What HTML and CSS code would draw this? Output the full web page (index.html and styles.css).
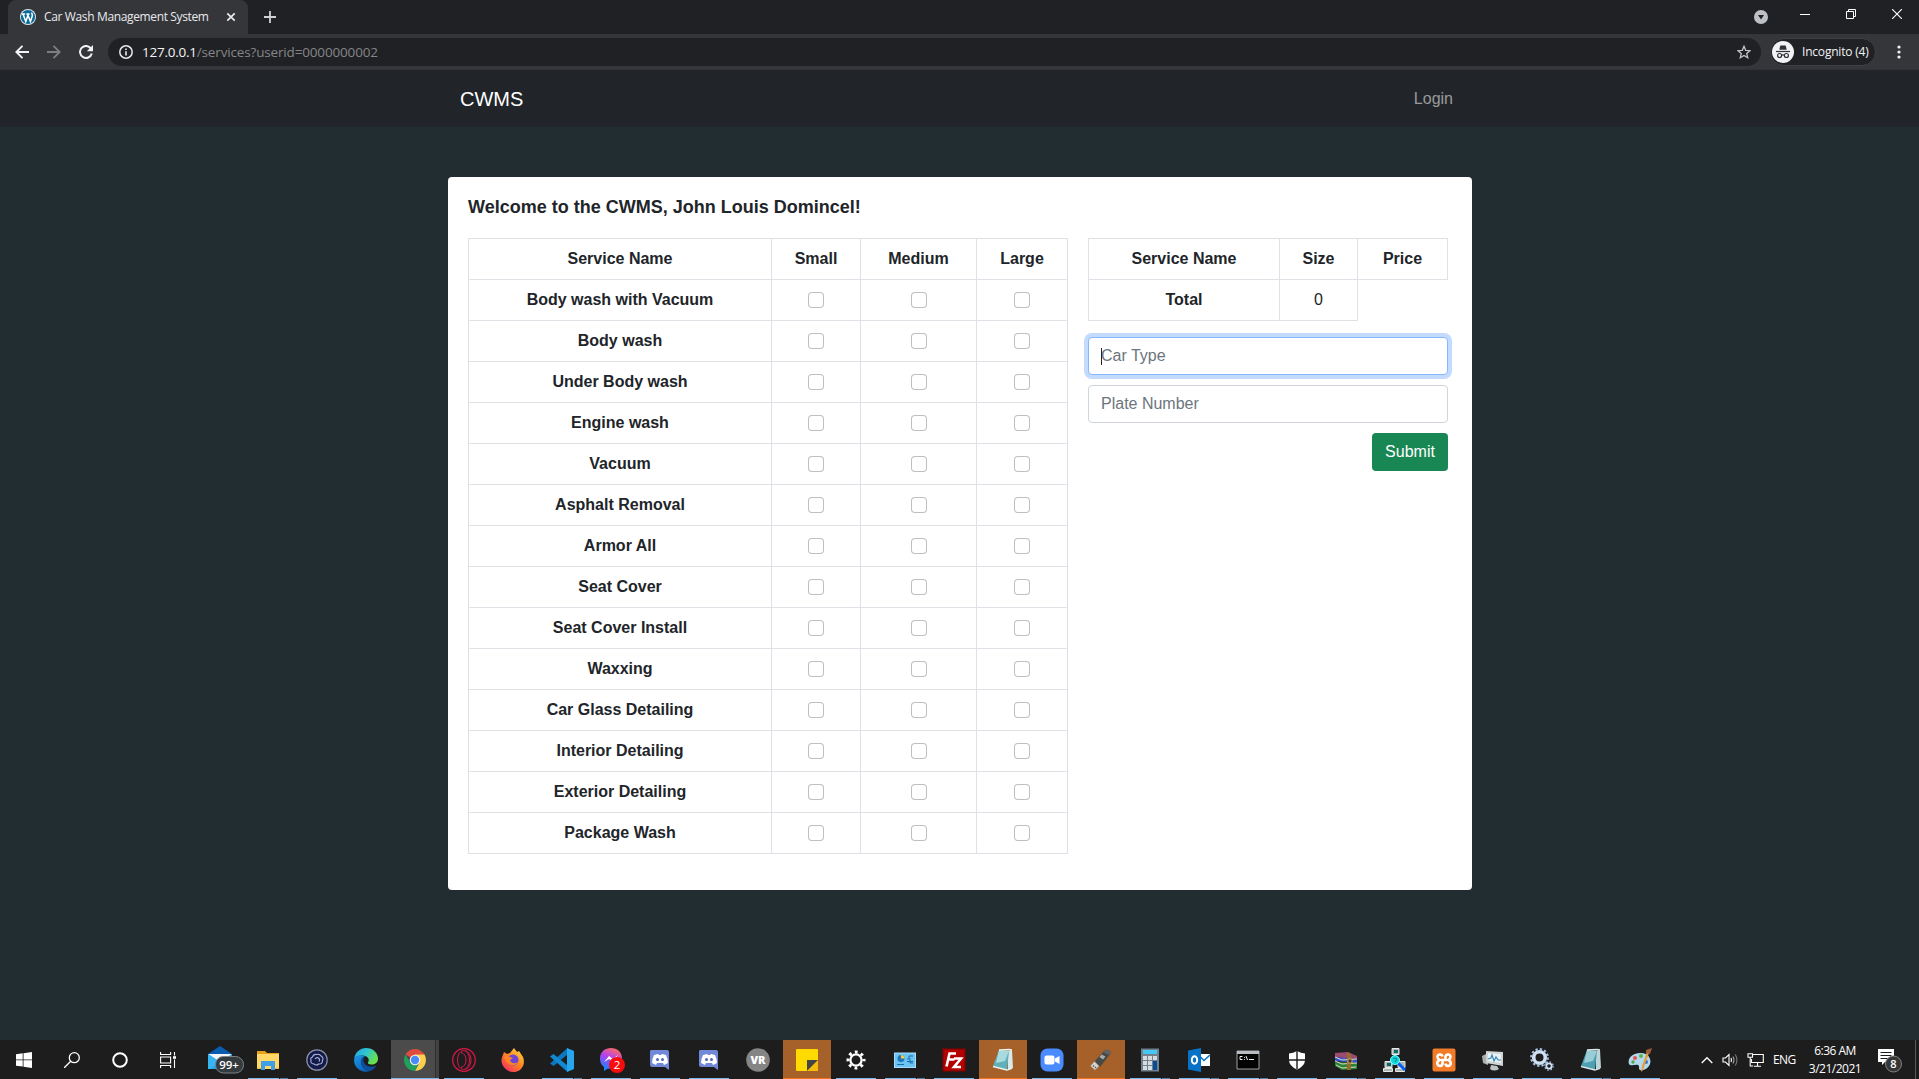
FILE: index.html
```html
<!DOCTYPE html>
<html lang="en">
<head>
<meta charset="utf-8">
<title>Car Wash Management System</title>
<link rel="stylesheet" href="styles.css">
</head>
<body>
<div class="screen">
  <header class="tabstrip">
    <div class="tab">
      <svg class="favicon" width="16" height="16" viewBox="0 0 16 16"><circle cx="8" cy="8" r="8" fill="#dfeaf0"/><circle cx="8" cy="8" r="7.1" fill="#0b6a99"/><path d="M1.8 5h3.4M6.4 5h3.2M3 5l2.8 7.6L8 6.3l2.4 6.3 1.8-5.4c.6-1.6-.8-2.2-.2-3.8M7.2 5l.8 2" fill="none" stroke="#fff" stroke-width="1.5"/></svg>
      <span class="tab-title">Car Wash Management System</span>
      <svg class="tab-close" width="10" height="10" viewBox="0 0 10 10"><path d="M1.3 1.3l7.4 7.4M8.7 1.3L1.3 8.7" stroke="#e8eaed" stroke-width="1.7"/></svg>
    </div>
    <svg class="new-tab" width="12" height="12" viewBox="0 0 12 12"><path d="M6 0v12M0 6h12" stroke="#d0d3d6" stroke-width="1.8"/></svg>
    <div class="window-buttons">
      <svg width="14" height="14" viewBox="0 0 14 14"><circle cx="7" cy="7" r="7" fill="#bdc1c6"/><path d="M4 5h6L7 9.5z" fill="#202124"/></svg>
      <svg class="wb-min" width="10" height="10" viewBox="0 0 10 10"><path d="M0 5.5h10" stroke="#fff"/></svg>
      <svg class="wb-max" width="10" height="10" viewBox="0 0 10 10"><path d="M.5 2.500h7v7h-7zM2.500 2.500v-2h7v7h-2" fill="none" stroke="#fff"/></svg>
      <svg class="wb-close" width="10" height="10" viewBox="0 0 10 10"><path d="M0 0l10 10M10 0L0 10" stroke="#fff" stroke-width="1.1"/></svg>
    </div>
  </header>
  <div class="toolbar">
    <svg class="nav-back" width="14" height="14" viewBox="0 0 14 14"><path d="M14 7H1.500M7.500.8L1.300 7l6.200 6.200" fill="none" stroke="#f1f3f4" stroke-width="1.900"/></svg>
    <svg class="nav-fwd" width="14" height="14" viewBox="0 0 14 14"><path d="M0 7h12.500M6.500.8L12.700 7l-6.200 6.200" fill="none" stroke="#7c7e82" stroke-width="1.800"/></svg>
    <svg class="nav-reload" width="14" height="14" viewBox="0 0 14 14"><path d="M12 3.600A6 6 0 1 0 12.800 8.600" fill="none" stroke="#f1f3f4" stroke-width="2"/><path d="M14 0v6.200H7.800z" fill="#f1f3f4"/></svg>
    <div class="omnibox">
      <svg width="14" height="14" viewBox="0 0 14 14"><circle cx="7" cy="7" r="6.200" fill="none" stroke="#e8eaed" stroke-width="1.500"/><path d="M7 6.200v4.300M7 3.400v1.600" stroke="#e8eaed" stroke-width="1.600"/></svg>
      <span class="url"><span class="host">127.0.0.1</span><span class="path">/services?userid=0000000002</span></span>
      <svg class="star" width="14" height="14" viewBox="0 0 14 14"><path d="M7 1.300l1.700 4 4.300.4-3.300 2.800 1 4.200L7 10.500l-3.700 2.200 1-4.200L1 5.700l4.300-.4z" fill="none" stroke="#c4c7ca" stroke-width="1.300"/></svg>
    </div>
    <div class="profile">
      <svg width="22" height="22" viewBox="0 0 22 22"><circle cx="11" cy="11" r="11" fill="#f1f3f4"/><path d="M8.300 4.500h5.400l1 4.300H7.300z" fill="#303236"/><path d="M4 10.500h14" stroke="#303236" stroke-width="1.200"/><g fill="none" stroke="#303236" stroke-width="1.200"><circle cx="7.600" cy="14.500" r="2"/><circle cx="14.400" cy="14.500" r="2"/><path d="M9.600 14.200q1.400-.8 2.800 0"/></g></svg>
      <span class="profile-name">Incognito (4)</span>
    </div>
    <svg class="kebab" width="4" height="14" viewBox="0 0 4 14" fill="#f1f3f4"><circle cx="2" cy="2" r="1.600"/><circle cx="2" cy="7" r="1.600"/><circle cx="2" cy="12" r="1.600"/></svg>
  </div>

  <main class="page">
    <nav class="navbar">
      <div class="navbar-inner"><a class="brand">CWMS</a><a class="nav-link">Login</a></div>
    </nav>
    <section class="card">
      <h1 class="welcome">Welcome to the CWMS, John Louis Domincel!</h1>
      <div class="columns">
        <table class="table services">
          <colgroup><col class="c-name"><col class="c-small"><col class="c-medium"><col class="c-large"></colgroup>
          <thead><tr><th>Service Name</th><th>Small</th><th>Medium</th><th>Large</th></tr></thead>
          <tbody>
            <tr><th>Body wash with Vacuum</th><td><input type="checkbox" class="check"></td><td><input type="checkbox" class="check"></td><td><input type="checkbox" class="check"></td></tr>
            <tr><th>Body wash</th><td><input type="checkbox" class="check"></td><td><input type="checkbox" class="check"></td><td><input type="checkbox" class="check"></td></tr>
            <tr><th>Under Body wash</th><td><input type="checkbox" class="check"></td><td><input type="checkbox" class="check"></td><td><input type="checkbox" class="check"></td></tr>
            <tr><th>Engine wash</th><td><input type="checkbox" class="check"></td><td><input type="checkbox" class="check"></td><td><input type="checkbox" class="check"></td></tr>
            <tr><th>Vacuum</th><td><input type="checkbox" class="check"></td><td><input type="checkbox" class="check"></td><td><input type="checkbox" class="check"></td></tr>
            <tr><th>Asphalt Removal</th><td><input type="checkbox" class="check"></td><td><input type="checkbox" class="check"></td><td><input type="checkbox" class="check"></td></tr>
            <tr><th>Armor All</th><td><input type="checkbox" class="check"></td><td><input type="checkbox" class="check"></td><td><input type="checkbox" class="check"></td></tr>
            <tr><th>Seat Cover</th><td><input type="checkbox" class="check"></td><td><input type="checkbox" class="check"></td><td><input type="checkbox" class="check"></td></tr>
            <tr><th>Seat Cover Install</th><td><input type="checkbox" class="check"></td><td><input type="checkbox" class="check"></td><td><input type="checkbox" class="check"></td></tr>
            <tr><th>Waxxing</th><td><input type="checkbox" class="check"></td><td><input type="checkbox" class="check"></td><td><input type="checkbox" class="check"></td></tr>
            <tr><th>Car Glass Detailing</th><td><input type="checkbox" class="check"></td><td><input type="checkbox" class="check"></td><td><input type="checkbox" class="check"></td></tr>
            <tr><th>Interior Detailing</th><td><input type="checkbox" class="check"></td><td><input type="checkbox" class="check"></td><td><input type="checkbox" class="check"></td></tr>
            <tr><th>Exterior Detailing</th><td><input type="checkbox" class="check"></td><td><input type="checkbox" class="check"></td><td><input type="checkbox" class="check"></td></tr>
            <tr><th>Package Wash</th><td><input type="checkbox" class="check"></td><td><input type="checkbox" class="check"></td><td><input type="checkbox" class="check"></td></tr>
          </tbody>
        </table>
        <div class="order">
          <table class="table summary">
            <colgroup><col class="s-name"><col class="s-size"><col class="s-price"></colgroup>
            <thead><tr><th>Service Name</th><th>Size</th><th>Price</th></tr></thead>
            <tbody><tr><th>Total</th><td>0</td></tr></tbody>
          </table>
          <form class="order-form">
            <div class="field"><input class="control focused" type="text" placeholder="Car Type"><span class="caret"></span></div>
            <div class="field"><input class="control" type="text" placeholder="Plate Number"></div>
            <button class="submit" type="button">Submit</button>
          </form>
        </div>
      </div>
    </section>
  </main>

  <footer class="taskbar">
    <div class="sys"><svg width="16" height="16" viewBox="0 0 16 16" fill="#fff"><path d="M0 2.200l6.700-.9v6.200H0zM7.500 1.200L16 0v7.500H7.500zM0 8.300h6.700v6.300L0 13.700zM7.500 8.300H16V16l-8.500-1.200z"/></svg></div>
    <div class="sys"><svg width="16" height="16" viewBox="0 0 16 16" fill="none" stroke="#fff" stroke-width="1.300"><circle cx="10.300" cy="5.700" r="5"/><path d="M6.700 9.300L0 16"/></svg></div>
    <div class="sys"><svg width="16" height="16" viewBox="0 0 16 16"><circle cx="8" cy="8" r="6.800" fill="none" stroke="#fff" stroke-width="2"/></svg></div>
    <div class="sys"><svg width="16" height="16" viewBox="0 0 16 16" fill="none" stroke="#fff" stroke-width="1.100"><path d="M.6 0v2.500h10V0M.6 16v-2.500h10V16M.6 5h10v6H.6zM14.500 0v3.500M14.500 7.500V16"/><path d="M13 4.200h3v2.600h-3z" fill="#fff" stroke="none"/></svg></div>
    <div class="app"><svg class="mail" width="36" height="28" viewBox="0 0 36 28"><path d="M0 8L12 0l12 8v6H0z" fill="#0a5cb0"/><path d="M1 8h22v9H1z" fill="#f5f7f8"/><path d="M0 8l12 8 12-8v15H0z" fill="#21a7ee"/><path d="M0 8l12 8-10 7H0z" fill="#36b4f4"/><rect x="7.500" y="10.500" width="28" height="16.500" rx="8" fill="#343b3f" stroke="#7d8386"/><text x="21" y="22.500" text-anchor="middle" class="badge-text" font-size="11.500" font-weight="600">99+</text></svg></div>
    <div class="app run multi"><svg width="24" height="24" viewBox="0 0 24 24"><path d="M1 3h8l2 2h12v16H1z" fill="#e5a21a"/><path d="M1 6h22v15H1z" fill="#ffd868"/><path d="M5 22v-9h14v9h-4v-4H9v4z" fill="#3fa0e5"/><path d="M1 20h4v1H1zM19 20h4v1h-4z" fill="#efb739"/></svg></div>
    <div class="app run"><svg width="24" height="24" viewBox="0 0 24 24"><circle cx="12" cy="12" r="10.200" fill="#151b48" stroke="#8a92ad" stroke-width="1.200"/><path d="M7.500 9q1-3 4-2.500 3-1 4.500 1.500 3 1.500 1.500 4.500 0 4-4 3.500-2 2-4.500 0-4-.5-3-4-1-2 1.500-3zM10 11q1.500-2 3.500-1 2 1.500.5 3.500" fill="none" stroke="#aab4da" stroke-width="1.100"/></svg></div>
    <div class="app"><svg width="24" height="24" viewBox="0 0 24 24"><defs><linearGradient id="edge" x1="0" y1="0" x2="1" y2=".5"><stop offset="0" stop-color="#22a0e8"/><stop offset=".5" stop-color="#2fc5d0"/><stop offset="1" stop-color="#69e04b"/></linearGradient><linearGradient id="edge2" x1="0" y1="0" x2=".6" y2="1"><stop offset="0" stop-color="#1b9be8"/><stop offset="1" stop-color="#0c62bb"/></linearGradient></defs><path d="M.2 11C1 4 6 0 12 0c7 0 12 5 12 10.500 0 4-3 6-6.500 6-2.500 0-4-1-3.500-2 1.500-2 1-5.500-3-6.500-4-1-9-.5-10.800 3z" fill="url(#edge)"/><path d="M.2 11C2 7.500 7 6.500 11 8c-3 1-4.500 4-4 7 .7 4.500 5 7.500 9 8C7 26-1 19 .2 11z" fill="url(#edge2)"/><path d="M11.500 8.500c-1.800 1-2.500 3-2 5 1 4 6 6.500 12 4.500q1.500-.5 0 1c-1.500 2-3.500 3.500-5.500 4-4-.5-8.300-3.500-9-8-.5-3 1.500-6 4.500-6.500z" fill="#0d4fa0"/></svg></div>
    <div class="app active"><svg width="24" height="24" viewBox="0 0 24 24"><path d="M12 12L2.500 6.500A11 11 0 0 1 21.500 6.500z" fill="#df4b3c"/><path d="M12 12V6.500h9.500A11 11 0 0 1 12 23l4.500-8.500z" fill="#fcd04a"/><path d="M12 23A11 11 0 0 1 2.500 6.500L7.500 15l4.500 2 3-.5z" fill="#20a05a"/><circle cx="12" cy="12" r="5.300" fill="#f1f3f4"/><circle cx="12" cy="12" r="4.200" fill="#4a8af4"/></svg></div>
    <div class="app run"><svg width="24" height="24" viewBox="0 0 24 24" fill="none" stroke="#dc1848"><circle cx="12" cy="12" r="11.300" stroke-width="1.200"/><ellipse cx="11.500" cy="12" rx="6" ry="9.500" stroke-width="1"/><path d="M9 4.500q5 1.500 5 7.500t-5 7.500M13.500 2.300q5.500 3.200 5.500 9.700t-5.500 9.700" stroke-width="1"/></svg></div>
    <div class="app"><svg width="24" height="24" viewBox="0 0 24 24"><defs><linearGradient id="fox" x1="1" y1="0" x2=".2" y2="1"><stop offset="0" stop-color="#ffe14a"/><stop offset=".5" stop-color="#ff8a20"/><stop offset="1" stop-color="#f72b64"/></linearGradient></defs><path d="M3 4l3 2 3-1 4-5 3 4 2-1 4 6c3 8-2 15-10 15S-2 15 1.500 8z" fill="url(#fox)"/><circle cx="12" cy="12" r="5.500" fill="#6d45d5"/><path d="M3 8l5 .5 4 1.500-3 2c1 4 5 4 8 2-2 5-12 5-14-6z" fill="#ff8524"/></svg></div>
    <div class="app run multi"><svg width="24" height="24" viewBox="0 0 24 24"><path d="M17.500 0v6.500L3.500 18 0 15.500z" fill="#0b78bd"/><path d="M17.500 24v-6.500L3.500 6 0 8.500z" fill="#1089d0"/><path d="M17 0l7 3v18l-7 3z" fill="#27a6ee"/></svg></div>
    <div class="app run"><svg class="messenger" width="28" height="28" viewBox="0 0 28 28"><defs><linearGradient id="msg" x1=".7" y1="0" x2=".3" y2="1"><stop offset="0" stop-color="#ff6c5d"/><stop offset=".45" stop-color="#b240f2"/><stop offset="1" stop-color="#0b8cff"/></linearGradient></defs><path d="M13 2c6 0 11 4 11 10.500S19 23 13 23l-3-.5L6 25v-4c-3-2-4-5-4-8.500C2 6 7 2 13 2z" fill="url(#msg)"/><path d="M6 16l5-6 4 3 5-4-5 7-4-3z" fill="#fff"/><circle cx="19" cy="19" r="8" fill="#f80b0b"/><text x="19" y="23" text-anchor="middle" class="badge-text" font-size="11.500">2</text></svg></div>
    <div class="app run"><svg width="24" height="24" viewBox="0 0 24 24"><path d="M3 2h16q2 0 2 2v18l-4-3H4q-2 0-2-2V4q0-2 1-2z" fill="#7289da"/><path d="M6 7l4-1 1 1h2l1-1 4 1q2 4 2 8l-4 2-1-2H9l-1 2-4-2q0-4 2-8z" fill="#fff"/><circle cx="9.500" cy="11.500" r="1.500" fill="#5268b5"/><circle cx="14.500" cy="11.500" r="1.500" fill="#5268b5"/></svg></div>
    <div class="app run"><svg width="24" height="24" viewBox="0 0 24 24"><path d="M3 2h16q2 0 2 2v18l-4-3H4q-2 0-2-2V4q0-2 1-2z" fill="#7289da"/><path d="M6 7l4-1 1 1h2l1-1 4 1q2 4 2 8l-4 2-1-2H9l-1 2-4-2q0-4 2-8z" fill="#fff"/><circle cx="9.500" cy="11.500" r="1.500" fill="#5268b5"/><circle cx="14.500" cy="11.500" r="1.500" fill="#5268b5"/></svg></div>
    <div class="app"><svg width="24" height="24" viewBox="0 0 24 24"><circle cx="12" cy="12" r="11.800" fill="#858585"/><text x="12" y="16" text-anchor="middle" class="badge-text" font-size="11" font-weight="800">VR</text></svg></div>
    <div class="app alert"><svg width="24" height="24" viewBox="0 0 24 24"><path d="M2 1h20q1 0 1 1v10H12v11H2q-1 0-1-1V2q0-1 1-1z" fill="#ffda00"/><path d="M12 12h11L12 23z" fill="#444"/><path d="M23 12v11H12z" fill="#f3bd0c"/></svg></div>
    <div class="app run"><svg width="20" height="20" viewBox="0 0 20 20" fill="none" stroke="#fff"><circle cx="10" cy="10" r="5.600" stroke-width="2.300"/><circle cx="10" cy="10" r="8" stroke-width="3" stroke-dasharray="2.800 3.483" stroke-dashoffset="1.400"/></svg></div>
    <div class="app run multi"><svg width="24" height="24" viewBox="0 0 24 24"><rect x="1.500" y="5" width="21" height="14.500" fill="#6cc4f3" stroke="#a9defa"/><circle cx="8" cy="10.500" r="3.500" fill="#1d76bd"/><path d="M8 10.500V7a3.500 3.500 0 0 1 3.500 3.500z" fill="#ffc92d"/><path d="M14 11h2V8h4M14 13.500h6M17 10v5h3M4 16.500h7" stroke="#176eae" fill="none"/></svg></div>
    <div class="app run"><svg width="24" height="24" viewBox="0 0 24 24"><path d="M1 1h22v22H1z" fill="#b30000" stroke="#860000" stroke-width="1.500" stroke-dasharray="2 1"/><path d="M4.500 18.500L7.500 5.500H14M6.500 11.500h6M12 10.500h7l-7 8.500h7" fill="none" stroke="#fff" stroke-width="2.600"/></svg></div>
    <div class="app alert"><svg width="24" height="24" viewBox="0 0 24 24"><path d="M17 3l4-1 1 18-5 2z" fill="#d7e9ea"/><path d="M8 2l10 1-2 19-14-4z" fill="#5fb0ba"/><path d="M8 2l10 1-4 10-9 2z" fill="#a9dade"/><path d="M8 2l10-.5 3 .5M2 18.500L16 22l5-1.500" stroke="#e9f1f1" stroke-width="1.300" fill="none"/></svg></div>
    <div class="app run"><svg width="24" height="24" viewBox="0 0 24 24"><rect x=".5" y=".5" width="23" height="23" rx="7" fill="#4a8cff"/><rect x="4.500" y="7.500" width="10" height="9" rx="2" fill="#fff"/><path d="M15 10.500L19.500 8v8L15 13.500z" fill="#fff"/></svg></div>
    <div class="app alert"><svg width="24" height="24" viewBox="0 0 24 24"><path d="M5.500 13.500L16 2q4-1 6 3L11 19z" fill="#484949"/><path d="M16 2q4-1 6 3l-2 2-6-3z" fill="#626464"/><path d="M1.500 18l4-4.500 4.500 4.500-4 4z" fill="#d2d2d0"/><path d="M4 17.500l1 1M6 19l1 1" stroke="#555" stroke-width="1.200"/><path d="M10.500 9l2-2.500 4 2-2.500 3z" fill="#aaa"/></svg></div>
    <div class="app run multi"><svg width="24" height="24" viewBox="0 0 24 24"><path d="M3 .5h18v23H3z" fill="#71818d"/><path d="M5 2h14v4H5z" fill="#43c8f4"/><path d="M5 8h4v4H5zM10 8h4v4h-4zM15 8h4v4h-4zM5 13h4v4H5zM10 13h4v4h-4zM5 18h4v4H5zM10 18h4v4h-4z" fill="#d6dcdf"/><path d="M15 13h4v9h-4z" fill="#0d4c94"/></svg></div>
    <div class="app run multi"><svg width="24" height="24" viewBox="0 0 24 24"><path d="M12 6h11v12H12z" fill="#fff"/><path d="M13 8.500l4 4 6-5.500" fill="none" stroke="#0873c6" stroke-width="1.600"/><path d="M1 2.500L14 0v24L1 21.500z" fill="#0873c6"/><ellipse cx="7.500" cy="12" rx="2.700" ry="3.700" fill="none" stroke="#fff" stroke-width="1.900"/></svg></div>
    <div class="app run multi"><svg width="24" height="24" viewBox="0 0 24 24"><path d="M1 3h22v18H1z" fill="#030303" stroke="#9fa1a4"/><path d="M1 3h22v3H1z" fill="#b8bbc0"/><path d="M6.500 8.500H4v3h2.500M8.500 9v.8M8.500 11v.8M10 8l1.500 4M13 11.500h5" stroke="#eee" fill="none"/></svg></div>
    <div class="app run"><svg width="24" height="24" viewBox="0 0 24 24"><path d="M12 3q4 2 8 2.500V12q0 6-8 9.500Q4 18 4 12V5.500Q8 5 12 3z" fill="#fff"/><path d="M12 3v18M4 12h16" stroke="#1d1d1e" stroke-width="1.400"/></svg></div>
    <div class="app run multi"><svg width="24" height="24" viewBox="0 0 24 24"><path d="M1 5l13-1 9 4v4L1 9z" fill="#9c4a70"/><path d="M1 9l22 2v4L1 13z" fill="#3555d0"/><path d="M1 14l22 1v6l-15 1-7-4z" fill="#268536"/><path d="M1 9l7 3 15-1M1 13l7 3 15-1M2 17l6 3 14-1" stroke="#e8d9c0" fill="none"/><path d="M13 4l4 2v16h-4z" fill="#9a6a2a"/><path d="M14 11h4v4h-4z" fill="#333" stroke="#d0aa59"/></svg></div>
    <div class="app run"><svg width="24" height="24" viewBox="0 0 24 24"><path d="M12 8v6L5 18M12 14l7 4" stroke="#ddd" stroke-width="1.500"/><g fill="#a9b7b5" stroke="#e6e9e7"><path d="M9 .5h7v6H9zM2 13.500h7v6H2zM15 13.500h7v6h-7zM.5 20.500h9v3h-9zM12.500 20.500h9v3h-9z"/></g><path d="M11 2h4v3h-4zM4 15h4v3H4z" fill="#096a67"/><path d="M15 15l7 7" stroke="#075ef5" stroke-width="3"/><circle cx="12" cy="12" r="4.500" fill="#10d8da" stroke="#70ffff"/><path d="M10 11q2-2 4 0l-2 3" stroke="#087d8d" fill="none"/></svg></div>
    <div class="app run"><svg width="24" height="24" viewBox="0 0 24 24"><rect x=".5" y=".5" width="23" height="23" rx="2" fill="#f37a26"/><path d="M10.500 8.500C10 6 6 5.500 5.500 8.500c0 2 1 3 2 3.500-2 1-2.500 3-2 4.500 1.500 2.500 5 1.500 5-1V12h3V8.500c.5-2.500 4.500-3 5 0 0 2-1 3-2 3.500 2 1 2.500 3 2 4.500-1.500 2.500-5 1.500-5-1" fill="none" stroke="#fff" stroke-width="2.600"/></svg></div>
    <div class="app run"><svg width="24" height="24" viewBox="0 0 24 24"><path d="M1 8l6-3v12l-5-2z" fill="#aab0af"/><path d="M5 3l17 1v14L5 15z" fill="#ced3d3"/><path d="M7 5l13 1v9L7 13z" fill="#e9f1f5"/><path d="M7 11l3-1 1-3 2 6 2-4 2 3h3" fill="none" stroke="#3688b8" stroke-width="1.200"/><path d="M10 17l6 1 2 3q-5 3-9 0z" fill="#bfc4c5"/></svg></div>
    <div class="app run"><svg width="24" height="24" viewBox="0 0 24 24" fill="none"><circle cx="9.500" cy="9.500" r="5.800" stroke="#d0e0f4" stroke-width="3.600"/><circle cx="9.500" cy="9.500" r="8.300" stroke="#a8c0df" stroke-width="2.200" stroke-dasharray="2.300 2.050"/><circle cx="19" cy="18" r="2.700" stroke="#d0e0f4" stroke-width="1.800"/><circle cx="19" cy="18" r="4.200" stroke="#a8c0df" stroke-width="1.300" stroke-dasharray="1.600 1.700"/></svg></div>
    <div class="app run multi"><svg width="24" height="24" viewBox="0 0 24 24"><path d="M17 3l4-1 1 18-5 2z" fill="#bdd5d8"/><path d="M8 2l10 1-2 19-14-4z" fill="#4d9fb2"/><path d="M8 2l10 1-4 10-9 2z" fill="#98ccd6"/><path d="M8 2l10-.5 3 .5M2 18.500L16 22l5-1.500" stroke="#dbe8e9" stroke-width="1.300" fill="none"/></svg></div>
    <div class="app run"><svg width="24" height="24" viewBox="0 0 24 24"><path d="M12 5c7-1 12 5 10 11-2 5-7 7-10 6-2-1 0-4-2-5-3-1-7 2-9-1C-1 10 5 5 12 5z" fill="#b3d9ef"/><circle cx="7" cy="10" r="2" fill="#e65650"/><circle cx="13" cy="8" r="2" fill="#59b64f"/><circle cx="5" cy="14" r="1.700" fill="#57a749"/><circle cx="18" cy="14" r="2" fill="#3272c9"/><path d="M21 5l-6 17-2 2 1-6 5-14z" fill="#e89b35"/><path d="M18 2l6-2-2 6-4-1z" fill="#9b5d38"/></svg></div>
    <div class="tray">
      <svg class="chev" width="12" height="8" viewBox="0 0 12 8"><path d="M.7 7L6 1.700 11.300 7" fill="none" stroke="#fff" stroke-width="1.300"/></svg>
      <svg class="vol" width="17" height="14" viewBox="0 0 17 14" fill="none" stroke="#fff" stroke-width="1.100"><path d="M1 5h2.500L7 1.500v11L3.500 9H1z"/><path d="M9 5q1 2 0 4"/><path d="M11 3.500q2 3.500 0 7" stroke="#999"/><path d="M13.300 1.500q3.200 5.500 0 11" stroke="#777"/></svg>
      <svg class="net" width="17" height="14" viewBox="0 0 17 14" fill="none" stroke="#fff" stroke-width="1.100"><path d="M6 1.500h10.300v8H4.500V6M10.500 9.500v3.500M7 13.200h7M1 .8h4.500v3.400H1zM3.200 4v9h3"/></svg>
      <span class="lang">ENG</span>
      <div class="clock"><span class="time">6:36 AM</span><span class="date">3/21/2021</span></div>
      <svg class="notes" width="25" height="26" viewBox="0 0 25 26"><path d="M0 2h16v13H7l-3 3v-3H0z" fill="#fff"/><path d="M2.500 5.500h11M2.500 8.500h11M2.500 11.500h7" stroke="#1d1d1e"/><circle cx="15.500" cy="17" r="8" fill="#363636" stroke="#838383"/><text x="15.500" y="21" text-anchor="middle" class="badge-text" font-size="11" font-weight="600">8</text></svg>
    </div>
  </footer>
</div>
</body>
</html>
```
FILE: styles.css
```css
* { box-sizing: border-box; }
body { margin: 0; background: #222d32; font-family: "Liberation Sans", Arial, sans-serif; font-size: 16px; line-height: 1.5; color: #212529; overflow: hidden; }
svg { display: block; flex: none; }
.screen { display: flex; flex-direction: column; width: 1919px; height: 1079px; }

.tabstrip, .toolbar, .taskbar { flex: none; display: flex; font-family: "Open Sans", "Noto Sans", sans-serif; white-space: nowrap; }
.tabstrip { height: 34px; background: #202124; align-items: flex-start; padding-left: 8px; }
.tab { width: 240px; height: 34px; background: #35363a; border-radius: 8px 8px 0 0; display: flex; align-items: center; padding: 0 13px 0 12px; }
.tab-title { margin-left: 8px; width: 166px; font-size: 12px; letter-spacing: -0.36px; color: #e8eaed; }
.tab-close { margin-left: 17px; }
.new-tab { margin: 11px 0 0 16px; }
.window-buttons { margin-left: auto; display: flex; padding: 10px 17px 0 0; }
.wb-min { margin: -1px 0 0 32px; }
.wb-max { margin: -1px 0 0 36px; }
.wb-close { margin: -1px 0 0 36px; }

.toolbar { height: 36px; background: #35363a; align-items: center; padding: 0 18px 0 15px; border-bottom: 1px solid #323236; }
.nav-fwd { margin-left: 18px; }
.nav-reload { margin-left: 18px; }
.omnibox { flex: 1; margin: 0 9px 0 15px; height: 28px; border-radius: 14px; background: #202124; display: flex; align-items: center; padding: 0 10px 0 11px; }
.url { margin-left: 9px; padding-top: 1px; font-size: 13.500px; letter-spacing: -0.16px; color: #9aa0a6; }
.host { color: #f4f4f5; letter-spacing: -0.24px; }
.path { color: #858688; }
.star { margin-left: auto; }
.profile { width: 106px; height: 28px; border: 1px solid #3f4044; border-radius: 14px; background: #202124; display: flex; align-items: center; padding-left: 1px; }
.profile-name { margin-left: 8px; font-size: 12px; letter-spacing: -0.2px; color: #f1f3f4; }
.kebab { margin-left: 21px; }

.page { flex: 1; min-height: 0; display: flex; flex-direction: column; align-items: center; }
.navbar { width: 100%; height: 57px; flex: none; background: #212529; display: flex; justify-content: center; }
.navbar-inner { width: 1000px; margin-left: 1px; display: flex; align-items: center; justify-content: space-between; padding: 0 7px 0 0; }
.brand { font-size: 20px; color: #fff; }
.nav-link { color: rgba(255, 255, 255, .55); }
.card { width: 1024px; height: 713px; margin: 50px 0 0 1px; background: #fff; border-radius: 4px; padding: 20px; }
.welcome { margin: 0; height: 41px; font-size: 18px; line-height: 20px; font-weight: 700; }
.columns { display: flex; gap: 20px; align-items: flex-start; }

.table { border-collapse: collapse; table-layout: fixed; text-align: center; }
.table th, .table td { border: 1px solid #dee2e6; height: 41px; padding: 0; vertical-align: middle; }
.services { width: 600px; }
.c-name { width: 303px; }
.c-small { width: 89px; }
.c-medium { width: 116px; }
.c-large { width: 91px; }
.check { appearance: none; display: block; width: 16px; height: 16px; margin: 0 auto; border: 1px solid rgba(0, 0, 0, .25); border-radius: 4px; background: #fff; }

.order { width: 360px; }
.summary { width: 360px; }
.s-name { width: 191px; }
.s-size { width: 78px; }
.s-price { width: 90px; }
.order-form { display: flex; flex-direction: column; gap: 10px; margin-top: 16px; }
.field { position: relative; height: 38px; }
.control { display: block; width: 100%; height: 38px; padding: 6px 12px; border: 1px solid #ced4da; border-radius: 4px; font: inherit; background: #fff; }
.control::placeholder { color: #6c757d; opacity: 1; }
.focused { border-color: #86b7fe; box-shadow: 0 0 0 4px rgba(13, 110, 253, .25); }
.caret { position: absolute; left: 13px; top: 11px; width: 1px; height: 17px; background: #212529; }
.submit { align-self: flex-end; width: 76px; height: 38px; border: 0; border-radius: 4px; background: #198754; color: #fff; font: inherit; padding: 0; }

.taskbar { height: 39px; background: #1d1d1e; }
.sys { width: 48px; height: 39px; display: flex; align-items: center; justify-content: center; padding-top: 1px; }
.sys:nth-child(4) { margin-right: 3px; }
.app { width: 48px; height: 39px; margin-right: 1px; flex: none; display: flex; align-items: center; justify-content: center; padding-top: 1px; background-repeat: no-repeat; background-position: 4px 38px; background-size: 40px 1px; }
.mail { margin-left: 13px; }
.messenger { margin-left: 1px; }
.run { background-image: linear-gradient(#76b9ed, #76b9ed); }
.multi { background-image: linear-gradient(90deg, #76b9ed 31px, #1d1d1e 31px, #1d1d1e 32px, #527fa2 32px); }
.active { background: linear-gradient(90deg, #4b4b4c 44px, #303031 44px, #303031 45px, #424243 45px); border-bottom: 1px solid #76b9ed; }
.alert { background: #a66029; border-bottom: 1px solid #f5761a; }
.badge-text { fill: #fff; font-family: "Open Sans", "Noto Sans", sans-serif; }

.tray { margin-left: auto; display: flex; align-items: center; color: #fff; font-size: 12px; padding-right: 12px; border-right: 1px solid #58595a; margin-right: 3px; }
.vol { margin-left: 9px; }
.net { margin-left: 8px; }
.lang { margin-left: 9px; width: 24px; letter-spacing: -0.6px; }
.clock { width: 64px; margin-left: 6px; display: flex; flex-direction: column; align-items: center; line-height: 18px; letter-spacing: -0.5px; }
.notes { margin-left: 11px; }
```
